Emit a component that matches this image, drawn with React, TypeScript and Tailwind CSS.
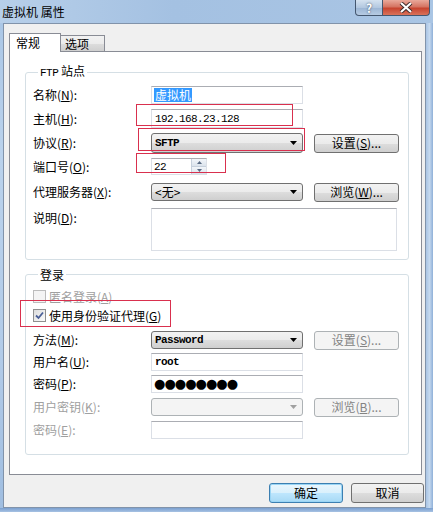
import React from "react";

const CJK = "font-['Noto_Sans_CJK_SC','Liberation_Sans',sans-serif]";
const MONO = "font-['Liberation_Mono','Courier_New',monospace]";

function U({ c }: { c: string }) {
  return <span className="underline underline-offset-[1px]">{c}</span>;
}

function Label({ children, disabled }: { children: React.ReactNode; disabled?: boolean }) {
  return (
    <div className={`w-[118px] shrink-0 text-[12px] leading-[14px] ${disabled ? "text-[#a0a0a0]" : "text-black"}`}>
      {children}
    </div>
  );
}

function Arrow({ disabled }: { disabled?: boolean }) {
  return (
    <svg width="7" height="4" viewBox="0 0 7 4" className="shrink-0">
      <polygon points="0,0 7,0 3.5,4" fill={disabled ? "#a0a0a0" : "#000"} />
    </svg>
  );
}

function Combo({ children, w, disabled }: { children?: React.ReactNode; w: string; disabled?: boolean }) {
  return (
    <div
      className={`${w} h-full shrink-0 rounded-[3px] border flex items-center justify-between pl-[3px] pr-[5px] ${
        disabled
          ? "border-[#adb2b5] bg-[#f4f4f4]"
          : "border-[#707070] bg-[linear-gradient(#f2f2f2_0%,#ebebeb_50%,#dddddd_51%,#cfcfcf_100%)]"
      }`}
    >
      <div className="flex items-center">{children}</div>
      <Arrow disabled={disabled} />
    </div>
  );
}

function TextBox({ children, w }: { children?: React.ReactNode; w: string }) {
  return (
    <div className={`${w} h-full shrink-0 bg-white border border-[#dbdfe6] border-t-[#abadb3] flex items-center pl-[2px]`}>
      {children}
    </div>
  );
}

function Btn({ children, disabled }: { children: React.ReactNode; disabled?: boolean }) {
  return (
    <div
      className={`ml-[11px] w-[85px] h-[19px] shrink-0 rounded-[3px] border flex items-center justify-center text-[12px] leading-[14px] ${
        disabled
          ? "border-[#adb2b5] bg-[#f4f4f4] text-[#838383]"
          : "border-[#707070] bg-[linear-gradient(#f2f2f2_0%,#ebebeb_50%,#dddddd_51%,#cfcfcf_100%)] text-black"
      }`}
    >
      {children}
    </div>
  );
}

function CheckBox({ checked, disabled }: { checked?: boolean; disabled?: boolean }) {
  return (
    <div
      className={`w-[13px] h-[13px] shrink-0 border flex items-center justify-center ${
        disabled ? "border-[#bcbcbc] bg-[#f4f4f4]" : "border-[#8f8f8f] bg-[linear-gradient(135deg,#dcdcdc,#fbfbfb)]"
      }`}
    >
      {checked && (
        <svg width="9" height="9" viewBox="0 0 9 9">
          <path d="M1 4.5 L3.5 7 L8 1.5" stroke="#4a5f97" strokeWidth="1.8" fill="none" />
        </svg>
      )}
    </div>
  );
}

function Dots() {
  return (
    <div className="flex items-center">
      {Array.from({ length: 8 }).map((_, i) => (
        <span
          key={i}
          className="w-[10.4px] text-center text-[13px] leading-[14px] font-['DejaVu_Sans',sans-serif] text-black"
        >
          ●
        </span>
      ))}
    </div>
  );
}

export default function App() {
  return (
    <div
      className={`relative w-[433px] h-[512px] overflow-hidden flex flex-col bg-[linear-gradient(180deg,#a8c5e5_0%,#bad2ec_30%,#b2cbe8_70%,#9fbde0_100%)] ${CJK}`}
    >
      {/* Title bar */}
      <div className="h-[23px] shrink-0 flex items-start justify-between bg-[linear-gradient(90deg,#b7cfe9_0%,#a4c1e2_40%,#a9c5e4_100%)]">
        <div className="pl-[2px] pt-[4px] text-[12px] leading-[15px] text-black">虚拟机 属性</div>
        <div className="flex mr-[3px]">
          <div className="w-[28px] h-[16px] border border-[#44576f] border-t-0 rounded-bl-[4px] bg-[linear-gradient(#d5e2f0_0%,#b3c8e0_50%,#9bb5d4_51%,#b6cbe3_100%)] flex items-center justify-center text-[12px] leading-[12px] font-bold text-white [text-shadow:0_0_2px_#2a3a50]">
            ?
          </div>
          <div className="w-[47px] h-[16px] border border-[#44576f] border-t-0 border-l-0 rounded-br-[4px] bg-[linear-gradient(#e9a99b_0%,#d57462_45%,#c7442f_55%,#d9725a_100%)] flex items-center justify-center">
            <svg width="14" height="11" viewBox="0 0 14 11">
              <path d="M2 1 L12 10 M12 1 L2 10" stroke="#3a2a2a" strokeWidth="4" />
              <path d="M2 1 L12 10 M12 1 L2 10" stroke="#ffffff" strokeWidth="2.2" />
            </svg>
          </div>
        </div>
      </div>

      {/* Frame + body */}
      <div className="flex flex-1 min-h-0">
        <div className="w-[3px] shrink-0" />
        <div className="flex-1 flex flex-col bg-[#f0f0f0] border border-[#8193aa] pl-[5px] pt-[9px]">
          {/* Tabs */}
          <div className="flex items-end h-[18px] relative z-10">
            <div className="w-[52px] h-[19px] -mb-[1px] bg-white border border-b-0 border-[#898c95] flex items-center pl-[6px] text-[12px] leading-[14px] text-black">
              常规
            </div>
            <div className="w-[44px] h-[16px] border border-l-0 border-b-0 border-[#898c95] bg-[linear-gradient(#f2f2f2_0%,#ebebeb_50%,#dddddd_51%,#cfcfcf_100%)] flex items-center pl-[4px] text-[12px] leading-[14px] text-black">
              选项
            </div>
          </div>

          {/* Panel */}
          <div className="w-[413px] h-[424px] bg-white border border-[#898c95] flex flex-col">
            {/* FTP group */}
            <fieldset className="mt-[10px] ml-[15px] mr-[12px] border border-[#d5dfe5] rounded-[3px] pl-[7px] pb-[8px] min-w-0">
              <legend className="ml-[5px] px-[2px] leading-[17px] text-[12px] text-black">
                <span className={`${MONO} text-[11px] tracking-[-0.5px]`}>FTP</span> 站点
              </legend>

              <div className="mt-[4px] h-[18px] flex items-center">
                <Label>
                  名称(<U c="N" />):
                </Label>
                <TextBox w="w-[152px]">
                  <span className="bg-[#3399ff] text-white text-[12px] leading-[14px] px-[1px]">虚拟机</span>
                </TextBox>
              </div>

              <div className="mt-[5px] h-[19px] flex items-center">
                <Label>
                  主机(<U c="H" />):
                </Label>
                <TextBox w="w-[152px]">
                  <span className={`${MONO} text-[11px] tracking-[-0.6px] leading-[14px] text-black pl-[1px]`}>
                    192.168.23.128
                  </span>
                </TextBox>
              </div>

              <div className="mt-[5px] h-[20px] flex items-center">
                <Label>
                  协议(<U c="R" />):
                </Label>
                <Combo w="w-[152px]">
                  <span className={`${MONO} text-[11px] tracking-[-0.6px] leading-[14px] font-bold text-black`}>SFTP</span>
                </Combo>
                <Btn>
                  设置(<U c="S" />)...
                </Btn>
              </div>

              <div className="mt-[5px] h-[17px] flex items-center">
                <Label>
                  端口号(<U c="O" />):
                </Label>
                <div className="w-[56px] h-full shrink-0 bg-white border border-[#dbdfe6] border-t-[#abadb3] flex items-center justify-between pl-[2px]">
                  <span className={`${MONO} text-[11px] tracking-[-0.6px] leading-[14px] text-black`}>22</span>
                  <div className="w-[15px] h-full flex flex-col border-l border-[#c6d0dc]">
                    <div className="flex-1 flex items-center justify-center bg-[linear-gradient(#f3f6fa,#dbe3ec)] border-b border-[#c6d0dc]">
                      <svg width="5" height="3" viewBox="0 0 5 3">
                        <polygon points="0,3 5,3 2.5,0" fill="#5a6b84" />
                      </svg>
                    </div>
                    <div className="flex-1 flex items-center justify-center bg-[linear-gradient(#f3f6fa,#dbe3ec)]">
                      <svg width="5" height="3" viewBox="0 0 5 3">
                        <polygon points="0,0 5,0 2.5,3" fill="#5a6b84" />
                      </svg>
                    </div>
                  </div>
                </div>
              </div>

              <div className="mt-[8px] h-[18px] flex items-center">
                <Label>
                  代理服务器(<U c="X" />):
                </Label>
                <Combo w="w-[152px]">
                  <span className="text-[12px] leading-[14px] text-black">&lt;无&gt;</span>
                </Combo>
                <Btn>
                  浏览(<U c="W" />)...
                </Btn>
              </div>

              <div className="mt-[7px] h-[43px] flex items-start">
                <div className="pt-[3px]">
                  <Label>
                    说明(<U c="D" />):
                  </Label>
                </div>
                <div className="w-[246px] h-full shrink-0 bg-white border border-[#dbdfe6] border-t-[#abadb3]" />
              </div>
            </fieldset>

            {/* Login group */}
            <fieldset className="mt-[6px] ml-[15px] mr-[12px] border border-[#d5dfe5] rounded-[3px] pl-[7px] pb-[15px] min-w-0">
              <legend className="ml-[5px] px-[2px] leading-[17px] text-[12px] text-black">登录</legend>

              <div className="mt-[7px] h-[13px] flex items-center">
                <CheckBox disabled />
                <span className="ml-[3px] text-[12px] leading-[14px] text-[#a0a0a0]">
                  匿名登录(<U c="A" />)
                </span>
              </div>

              <div className="mt-[6px] h-[13px] flex items-center">
                <CheckBox checked />
                <span className="ml-[3px] text-[12px] leading-[14px] text-black">
                  使用身份验证代理(<U c="G" />)
                </span>
              </div>

              <div className="mt-[9px] h-[18px] flex items-center">
                <Label>
                  方法(<U c="M" />):
                </Label>
                <Combo w="w-[152px]">
                  <span className={`${MONO} text-[11px] tracking-[-0.6px] leading-[14px] font-bold text-black`}>Password</span>
                </Combo>
                <Btn disabled>
                  设置(<U c="S" />)...
                </Btn>
              </div>

              <div className="mt-[4px] h-[18px] flex items-center">
                <Label>
                  用户名(<U c="U" />):
                </Label>
                <TextBox w="w-[152px]">
                  <span className={`${MONO} text-[11px] tracking-[-0.6px] leading-[14px] font-bold text-black pl-[1px]`}>root</span>
                </TextBox>
              </div>

              <div className="mt-[4px] h-[18px] flex items-center">
                <Label>
                  密码(<U c="P" />):
                </Label>
                <TextBox w="w-[152px]">
                  <Dots />
                </TextBox>
              </div>

              <div className="mt-[5px] h-[18px] flex items-center">
                <Label disabled>
                  用户密钥(<U c="K" />):
                </Label>
                <Combo w="w-[152px]" disabled />
                <Btn disabled>
                  浏览(<U c="B" />)...
                </Btn>
              </div>

              <div className="mt-[5px] h-[18px] flex items-center">
                <Label disabled>
                  密码(<U c="E" />):
                </Label>
                <TextBox w="w-[152px]" />
              </div>
            </fieldset>
          </div>

          {/* Bottom buttons */}
          <div className="mt-[8px] flex justify-end gap-[8px] pr-[1px]">
            <div className="w-[74px] h-[20px] rounded-[3px] border border-[#3c7fb1] bg-[linear-gradient(#eaf6fd_0%,#d9f0fc_50%,#bee6fd_51%,#a7d9f5_100%)] shadow-[inset_0_0_0_1px_#9ad5f5] flex items-center justify-center text-[12px] leading-[14px] text-black">
              确定
            </div>
            <div className="w-[73px] h-[20px] rounded-[3px] border border-[#707070] bg-[linear-gradient(#f2f2f2_0%,#ebebeb_50%,#dddddd_51%,#cfcfcf_100%)] flex items-center justify-center text-[12px] leading-[14px] text-black">
              取消
            </div>
          </div>
        </div>
        <div className="w-[7px] shrink-0 bg-[linear-gradient(90deg,#a9c4e4,#c5d9ef_50%,#8fb0d8)]" />
      </div>
      <div className="h-[4px] shrink-0 bg-[linear-gradient(#7a9fcf,#a7c2e3)]" />

      {/* Red annotation boxes */}
      <div className="absolute left-[136px] top-[104px] w-[157px] h-[22px] border border-[#d9304e]" />
      <div className="absolute left-[138px] top-[128px] w-[167px] h-[23px] border border-[#d9304e]" />
      <div className="absolute left-[136px] top-[153px] w-[90px] h-[20px] border border-[#d9304e]" />
      <div className="absolute left-[20px] top-[300px] w-[151px] h-[27px] border border-[#d9304e]" />
    </div>
  );
}
